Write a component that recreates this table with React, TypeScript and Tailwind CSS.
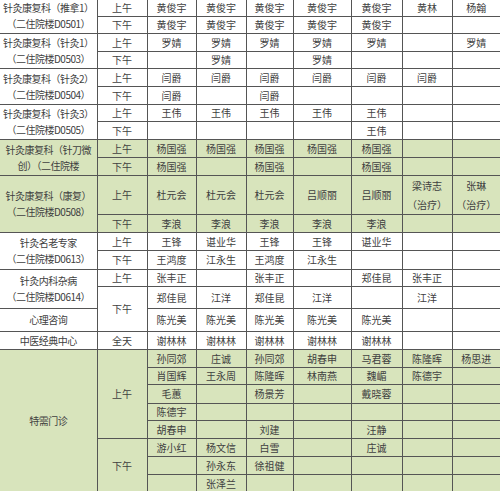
import type { ReactNode } from 'react';

type Row = {
  h: string;
  green?: boolean;
  label?: { text: ReactNode; span: number };
  period?: { text: string; span: number };
  names: ReactNode[];
};

const treat = (name: string) => (
  <span className="inline-block leading-[19px]">
    {name}
    <br />
    （治疗）
  </span>
);

const rows: Row[] = [
  {
    h: 'h-[18px]',
    label: { text: <>针灸康复科（推拿1）<br />（二住院楼D0501）</>, span: 2 },
    period: { text: '上午', span: 1 },
    names: ['黄俊宇', '黄俊宇', '黄俊宇', '黄俊宇', '黄俊宇', '黄林', '杨翰'],
  },
  { h: 'h-[17px]', period: { text: '下午', span: 1 }, names: ['黄俊宇', '黄俊宇', '黄俊宇', '黄俊宇', '黄俊宇', '', ''] },
  {
    h: 'h-[18px]',
    label: { text: <>针灸康复科（针灸1）<br />（二住院楼D0503）</>, span: 2 },
    period: { text: '上午', span: 1 },
    names: ['罗婧', '罗婧', '罗婧', '罗婧', '罗婧', '', '罗婧'],
  },
  { h: 'h-[17px]', period: { text: '下午', span: 1 }, names: ['', '罗婧', '', '罗婧', '', '', ''] },
  {
    h: 'h-[18px]',
    label: { text: <>针灸康复科（针灸2）<br />（二住院楼D0504）</>, span: 2 },
    period: { text: '上午', span: 1 },
    names: ['闫爵', '闫爵', '闫爵', '闫爵', '闫爵', '闫爵', ''],
  },
  { h: 'h-[18px]', period: { text: '下午', span: 1 }, names: ['闫爵', '', '闫爵', '', '', '', ''] },
  {
    h: 'h-[17px]',
    label: { text: <>针灸康复科（针灸3）<br />（二住院楼D0505）</>, span: 2 },
    period: { text: '上午', span: 1 },
    names: ['王伟', '王伟', '王伟', '王伟', '王伟', '', ''],
  },
  { h: 'h-[18px]', period: { text: '下午', span: 1 }, names: ['', '', '', '', '王伟', '', ''] },
  {
    h: 'h-[18px]',
    green: true,
    label: { text: <>针灸康复科（针刀微<br />创）（二住院楼</>, span: 2 },
    period: { text: '上午', span: 1 },
    names: ['杨国强', '杨国强', '杨国强', '杨国强', '杨国强', '', ''],
  },
  { h: 'h-[18px]', green: true, period: { text: '下午', span: 1 }, names: ['杨国强', '', '杨国强', '', '杨国强', '', ''] },
  {
    h: 'h-[38px]',
    green: true,
    label: { text: <>针灸康复科（康复）<br />（二住院楼D0508）</>, span: 2 },
    period: { text: '上午', span: 1 },
    names: ['杜元会', '杜元会', '杜元会', '吕顺丽', '吕顺丽', treat('梁诗志'), treat('张琳')],
  },
  { h: 'h-[18px]', green: true, period: { text: '下午', span: 1 }, names: ['李浪', '李浪', '李浪', '李浪', '李浪', '', ''] },
  {
    h: 'h-[18px]',
    label: { text: <>针灸名老专家<br />（二住院楼D0613）</>, span: 2 },
    period: { text: '上午', span: 1 },
    names: ['王锋', '谌业华', '王锋', '王锋', '谌业华', '', ''],
  },
  { h: 'h-[19px]', period: { text: '下午', span: 1 }, names: ['王鸿度', '江永生', '王鸿度', '江永生', '', '', ''] },
  {
    h: 'h-[17px]',
    label: { text: <>针灸内科杂病<br />（二住院楼D0614）</>, span: 2 },
    period: { text: '上午', span: 1 },
    names: ['张丰正', '', '张丰正', '', '郑佳昆', '张丰正', ''],
  },
  { h: 'h-[22px]', period: { text: '下午', span: 2 }, names: ['郑佳昆', '江洋', '郑佳昆', '江洋', '', '江洋', ''] },
  {
    h: 'h-[23px]',
    label: { text: '心理咨询', span: 1 },
    names: ['陈光美', '陈光美', '陈光美', '陈光美', '陈光美', '', ''],
  },
  {
    h: 'h-[18px]',
    label: { text: '中医经典中心', span: 1 },
    period: { text: '全天', span: 1 },
    names: ['谢林林', '谢林林', '谢林林', '谢林林', '谢林林', '', ''],
  },
  {
    h: 'h-[18px]',
    green: true,
    label: { text: '特需门诊', span: 8 },
    period: { text: '上午', span: 5 },
    names: ['孙同郊', '庄诚', '孙同郊', '胡春申', '马君蓉', '陈隆晖', '杨思进'],
  },
  { h: 'h-[17px]', green: true, names: ['肖国辉', '王永周', '陈隆晖', '林南燕', '魏嵋', '陈德宇', ''] },
  { h: 'h-[19px]', green: true, names: ['毛蕙', '', '杨景芳', '', '戴晓蓉', '', ''] },
  { h: 'h-[17px]', green: true, names: ['陈德宇', '', '', '', '', '', ''] },
  { h: 'h-[18px]', green: true, names: ['胡春申', '', '刘建', '', '汪静', '', ''] },
  {
    h: 'h-[18px]',
    green: true,
    period: { text: '下午', span: 3 },
    names: ['游小红', '杨文信', '白雪', '', '庄诚', '', ''],
  },
  { h: 'h-[18px]', green: true, names: ['', '孙永东', '徐祖健', '', '', '', ''] },
  { h: 'h-[18px]', green: true, names: ['', '张泽兰', '', '', '', '', ''] },
];

const cell = 'border border-[#555555] p-0 text-center align-middle';

export default function App() {
  return (
    <div className="w-[500px] h-[491px] overflow-hidden bg-white">
      <table
        className="-mt-[2px] w-[500px] table-fixed border-collapse text-[10px] leading-[16px] text-[#404040]"
        style={{ fontFamily: '"Noto Sans CJK SC", "Noto Sans", sans-serif' }}
      >
        <colgroup>
          <col className="w-[97px]" />
          <col className="w-[50px]" />
          <col className="w-[49px]" />
          <col className="w-[50px]" />
          <col className="w-[47px]" />
          <col className="w-[58px]" />
          <col className="w-[51px]" />
          <col className="w-[50px]" />
          <col className="w-[48px]" />
        </colgroup>
        <tbody>
          {rows.map((row, i) => (
            <tr key={i} className={`${row.h} ${row.green ? 'bg-[#d8e4bc]' : ''}`}>
              {row.label && (
                <td rowSpan={row.label.span} className={`${cell} border-l-0 whitespace-nowrap tracking-[-0.5px]`}>
                  {row.label.text}
                </td>
              )}
              {row.period && (
                <td rowSpan={row.period.span} className={cell}>
                  {row.period.text}
                </td>
              )}
              {row.names.map((n, j) => (
                <td key={j} className={`${cell} whitespace-nowrap ${j === 6 ? 'border-r-0' : ''}`}>
                  {n}
                </td>
              ))}
            </tr>
          ))}
        </tbody>
      </table>
    </div>
  );
}
